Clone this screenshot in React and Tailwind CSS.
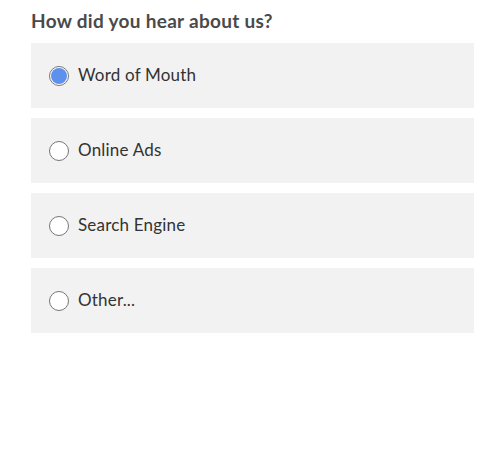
import React, { useState } from 'react';

const options = ['Word of Mouth', 'Online Ads', 'Search Engine', 'Other...'];

export default function App() {
    const [selected, setSelected] = useState('Word of Mouth');

    return (
        <div className="w-[500px] h-[460px] bg-white px-[31px] pt-[10px] font-['Lato',sans-serif]">
            {/* Question */}
            <h2 className="text-[19px] font-bold text-[#4a4a4a] leading-[22px] tracking-[0.3px] mb-[11px]">
                How did you hear about us?
            </h2>

            {/* Options */}
            <div className="flex flex-col gap-[10px] w-[443px]">
                {options.map((opt) => {
                    const checked = selected === opt;
                    return (
                        <label
                            key={opt}
                            onClick={() => setSelected(opt)}
                            className="h-[65px] bg-[#f2f2f2] flex items-center pl-[18px] cursor-pointer"
                        >
                            <span className="w-[20px] h-[20px] rounded-full border border-[#767676] bg-white flex items-center justify-center">
                                {checked && <span className="w-[16px] h-[16px] rounded-full bg-[#5e91ee]"></span>}
                            </span>
                            <span className="ml-[9px] text-[17px] text-[#333333] tracking-[0.2px] -mt-[2px]">{opt}</span>
                        </label>
                    );
                })}
            </div>
        </div>
    );
}
